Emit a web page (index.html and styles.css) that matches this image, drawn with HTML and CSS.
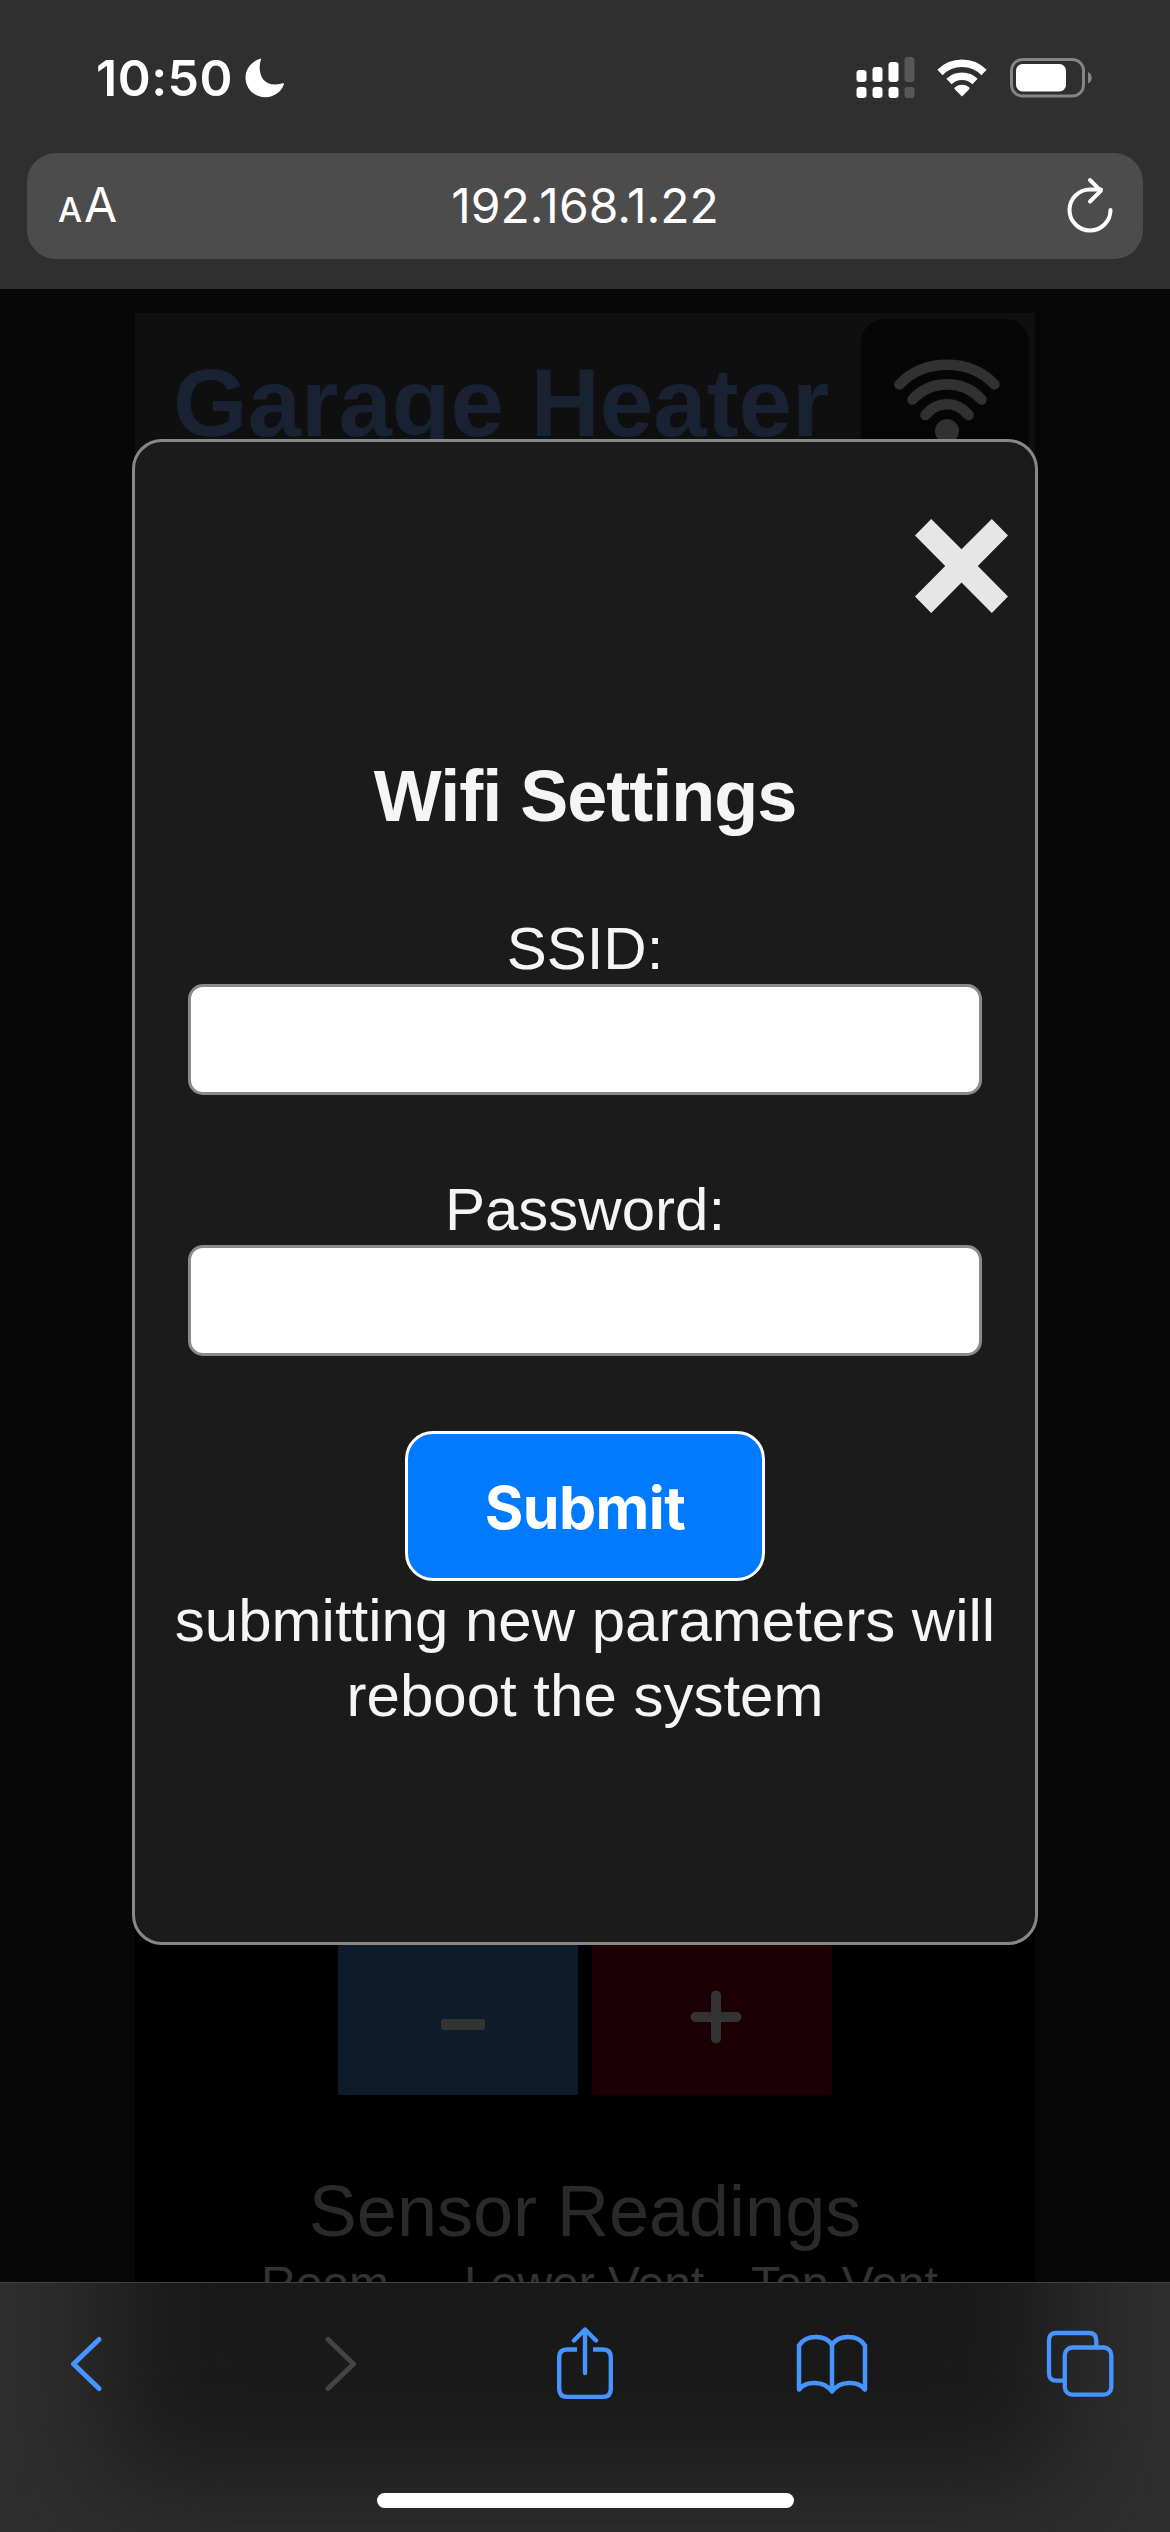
FILE: index.html
```html
<!DOCTYPE html>
<html lang="en">
<head>
<meta charset="utf-8">
<title>Garage Heater</title>
<link rel="stylesheet" href="styles.css">
</head>
<body>
<header class="chrome">
  <div class="status">
    <span class="time">10:50</span>
    <svg class="moon" width="40" height="40" viewBox="0 0 40 40"><path d="M15.2.8C15.8.4 16.300.6 16 1.300 12 14 17 27 31 26.500c2.500 0 4.500-.500 6.500-1.200 1-.4 1.700 0 1.400 1C36.500 34 29 39.200 20.500 39.200 9 39.200.5 30.500.5 19.500.5 11 6.500 3.500 15.200.8z" fill="#fff"/></svg>
    <svg class="signal" width="60" height="42" viewBox="0 0 60 42">
      <g fill="#fff"><rect x=".5" y="13" width="10" height="12" rx="3"/><rect x="16.500" y="10" width="10" height="15" rx="3"/><rect x="32.500" y="5" width="10" height="20" rx="3"/><rect x=".5" y="30" width="10" height="11" rx="3"/><rect x="16.500" y="30" width="10" height="11" rx="3"/><rect x="32.500" y="30" width="10" height="11" rx="3"/></g>
      <g fill="#575757"><rect x="48.500" y="0" width="10" height="25" rx="3"/><rect x="48.500" y="30" width="10" height="11" rx="3"/></g>
    </svg>
    <svg class="wifi" width="52" height="38" viewBox="0 0 52 38">
      <path d="M4 13.500A31 31 0 0 1 48 13.500M13 22.500A18.500 18.500 0 0 1 39 22.500" fill="none" stroke="#fff" stroke-width="7.500"/>
      <path d="M26 37.500l-7-7c-.8-.8-.8-1.600 0-2.200 4-3.300 10-3.300 14 0 .8.600.8 1.400 0 2.200z" fill="#fff"/>
    </svg>
    <svg class="battery" width="84" height="40" viewBox="0 0 84 40">
      <rect x="1.500" y="1.500" width="72" height="36.500" rx="11" fill="none" stroke="#858585" stroke-width="3"/>
      <rect x="6" y="6" width="50" height="27.500" rx="6.500" fill="#fff"/>
      <path d="M78 14c5 2 5 9.500 0 11.500z" fill="#858585"/>
    </svg>
  </div>
  <div class="address">
    <span class="textsize"><span class="small-a">A</span><span class="big-a">A</span></span>
    <span class="url">192.168.1.22</span>
    <svg class="reload" width="48" height="56" viewBox="0 0 48 56" fill="none" stroke="#fff" stroke-width="4" stroke-linecap="round" stroke-linejoin="round"><path d="M43.500 33A20.500 20.500 0 1 1 23 12.500h11M23 3l10.800 10.800L23 24.500"/></svg>
  </div>
</header>

<main class="page">
  <div class="panel">
    <div class="panel-head">
      <h1>Garage Heater</h1>
      <div class="wifi-button">
        <svg width="108" height="88" viewBox="0 0 108 88" fill="none" stroke="#313131" stroke-width="10.600" stroke-linecap="round"><path d="M6.500 27.500Q25 7.700 54 7.700T101.500 27.500M19.500 42.500Q33.500 27.400 54 27.400T88.500 42.500M32.500 58Q41 47.200 54 47.200T75.500 58"/><circle cx="54" cy="74" r="12" fill="#313131" stroke="none"/></svg>
      </div>
    </div>
    <div class="controls">
      <div class="step down"><svg width="44" height="11"><rect width="44" height="11" rx="2.500" fill="#333"/></svg></div>
      <div class="step up"><svg width="52" height="54" viewBox="0 0 52 54" stroke="#333" stroke-width="10" stroke-linecap="round"><path d="M26 5.500v43M5.500 27h41"/></svg></div>
    </div>
    <h2 class="readings">Sensor Readings</h2>
    <div class="labels"><span>Room</span><span>Lower Vent</span><span>Top Vent</span></div>
  </div>

  <section class="modal">
    <svg class="close" width="93" height="94" viewBox="0 0 93 94"><path d="M16.200 0l30.300 30.300L76.800 0 93 16.500 62.800 47 93 77.500 76.800 94 46.500 63.400 16.200 94 0 77.500 30.200 47 0 16.500z" fill="#e6e6e6"/></svg>
    <h2 class="modal-title">Wifi Settings</h2>
    <form class="form">
      <label for="ssid">SSID:</label>
      <input id="ssid" type="text">
      <label for="pass">Password:</label>
      <input id="pass" type="password">
      <button type="button">Submit</button>
    </form>
    <p class="note">submitting new parameters will reboot the system</p>
  </section>
</main>

<footer class="toolbar">
  <nav class="tools">
    <svg class="back" width="32" height="56" viewBox="0 0 32 56" fill="none" stroke="#4594ff" stroke-width="5" stroke-linecap="round" stroke-linejoin="round"><path d="M29 3.500L3.500 28 29 52.500"/></svg>
    <svg class="forward" width="32" height="56" viewBox="0 0 32 56" fill="none" stroke="#444" stroke-width="5" stroke-linecap="round" stroke-linejoin="round"><path d="M3 3.500L28.500 28 3 52.500"/></svg>
    <svg class="share" width="58" height="74" viewBox="0 0 58 74" fill="none" stroke="#4594ff" stroke-width="4.400" stroke-linejoin="round"><path d="M21 22.500H11q-7.800 0-7.800 7.800v31.800q0 7.800 7.800 7.800h36q7.800 0 7.800-7.800V30.300q0-7.800-7.800-7.800H37"/><path d="M29 46V2.500M18 13.500l11-11 11 11" stroke-linecap="round"/></svg>
    <svg class="book" width="72" height="62" viewBox="0 0 72 62" fill="none" stroke="#4594ff" stroke-width="4.500" stroke-linecap="round" stroke-linejoin="round"><path d="M36 12C30 1.500 10 1 3 12.500v44C10 47.500 28 47.500 36 58.500 44 47.500 62 47.500 69 56.500v-44C62 1 42 1.500 36 12zv46"/></svg>
    <svg class="tabs" width="68" height="68" viewBox="0 0 68 68" fill="none" stroke="#4594ff" stroke-width="4.300"><path d="M18 50.700h-7.500q-7.500 0-7.500-7.500V10.500Q3 3 10.500 3h32.300q7.500 0 7.500 7.500v7"/><rect x="18.800" y="17.500" width="46.500" height="47.200" rx="7.500"/></svg>
  </nav>
  <div class="home"></div>
</footer>
</body>
</html>
```
FILE: styles.css
```css
* { box-sizing: border-box; }
svg { display: block; flex: none; }
body {
  margin: 0;
  width: 1170px;
  height: 2532px;
  display: flex;
  flex-direction: column;
  overflow: hidden;
  background: #070707;
  font-family: "Liberation Sans", Arial, sans-serif;
}
h1, h2, p { margin: 0; }

.chrome { flex: none; height: 289px; background: #2f2f2f; }
.status {
  height: 153px;
  padding: 0 76px 0 96px;
  display: flex;
  align-items: center;
  font-family: Inter, sans-serif;
}
.time {
  width: 138px;
  font-size: 50px;
  line-height: 60px;
  font-weight: 600;
  letter-spacing: 0.5px;
  color: #fff;
  padding-top: 3px;
  white-space: nowrap;
}
.moon { margin-left: 11px; margin-top: 3px; }
.signal { margin-left: auto; margin-top: 3px; }
.wifi { margin-left: 20px; margin-top: 2px; }
.battery { margin-left: 22px; margin-top: 2px; }

.address {
  margin: 0 27px;
  height: 106px;
  padding: 0 28px 0 31px;
  border-radius: 29px;
  background: #4c4c4c;
  color: #fff;
  font-family: Inter, sans-serif;
  display: grid;
  grid-template-columns: 1fr auto 1fr;
  align-items: center;
}
.textsize { display: flex; align-items: baseline; gap: 2px; line-height: 60px; padding-top: 3px; }
.small-a { font-size: 34px; font-weight: 500; }
.big-a { font-size: 48px; font-weight: 400; }
.url { font-size: 48px; letter-spacing: 0; line-height: 60px; margin-left: -3px; }
.reload { justify-self: end; margin-top: -3px; }

.page { position: relative; flex: 1; overflow: hidden; padding-top: 24px; }
.panel { width: 900px; height: 2000px; margin: 0 auto; background: #000; }
.panel-head {
  height: 200px;
  background: #0f0f0f;
  display: flex;
  justify-content: space-between;
  padding: 6px 6px 0 38px;
}
.panel-head h1 {
  padding-top: 29px;
  font-size: 96px;
  line-height: 110px;
  color: #182233;
  white-space: nowrap;
}
.wifi-button {
  width: 168px;
  height: 168px;
  border-radius: 24px;
  background: #060606;
  display: flex;
  justify-content: center;
  align-items: flex-start;
  padding: 38px 0 0 3px;
}
.controls { margin-top: 1422px; display: flex; justify-content: center; gap: 14px; }
.step { width: 240px; height: 160px; display: flex; align-items: center; justify-content: center; }
.down { background: #0e1b2a; padding: 19px 0 0 10px; }
.up { background: #1c0005; padding: 3px 0 0 7px; }
.readings {
  margin-top: 74px;
  text-align: center;
  font-size: 72px;
  line-height: 84px;
  font-weight: 400;
  color: #2a2a2a;
}
.labels {
  margin-top: 3px;
  padding-left: 126px;
  display: flex;
  font-size: 48px;
  line-height: 56px;
  color: #333;
  white-space: nowrap;
}
.labels span:nth-child(1) { width: 203px; }
.labels span:nth-child(2) { width: 287px; }

/* dialog over the dimmed page */
.modal {
  position: absolute;
  left: 132px;
  top: 150px;
  width: 906px;
  height: 1506px;
  padding: 77px 27px 0;
  border: 3px solid #888;
  border-radius: 30px;
  background: #1b1b1b;
  color: #f5f5f5;
  display: flex;
  flex-direction: column;
  align-items: center;
  text-align: center;
}
.close { align-self: flex-end; }
.modal-title { margin-top: 141px; font-size: 72px; line-height: 84px; letter-spacing: -1px; }
.form { display: flex; flex-direction: column; align-items: center; padding-top: 76px; }
.form label { font-size: 60px; line-height: 69px; }
.form input {
  width: 794px;
  height: 111px;
  margin: 1px 0 80px;
  border: 3px solid #8a898e;
  border-radius: 15px;
  background: #fff;
}
.form button {
  width: 360px;
  height: 150px;
  margin-top: -5px;
  padding: 3px 0 0;
  border: 3px solid #fff;
  border-radius: 28px;
  background: #007aff;
  color: #fff;
  font: 700 59px/70px Inter, sans-serif;
  letter-spacing: -0.6px;
}
.note { margin-top: 2px; font-size: 60px; line-height: 75px; width: 840px; }

.toolbar {
  position: relative;
  flex: none;
  height: 250px;
  border-top: 1px solid #424242;
  background: #2e2e2e;
  overflow: hidden;
}
.toolbar::before {
  content: "";
  position: absolute;
  left: 108px;
  right: 108px;
  top: -200px;
  height: 395px;
  background: #191919;
  filter: blur(56px);
}
.tools {
  position: relative;
  height: 162px;
  padding-left: 70px;
  display: flex;
  align-items: center;
}
.forward { margin-left: 223px; }
.share { margin-left: 199px; }
.book { margin-left: 182px; }
.tabs { margin-left: 178px; }
.home {
  position: relative;
  width: 417px;
  height: 15px;
  margin: 48px auto 0;
  border-radius: 8px;
  background: #fff;
}
```
